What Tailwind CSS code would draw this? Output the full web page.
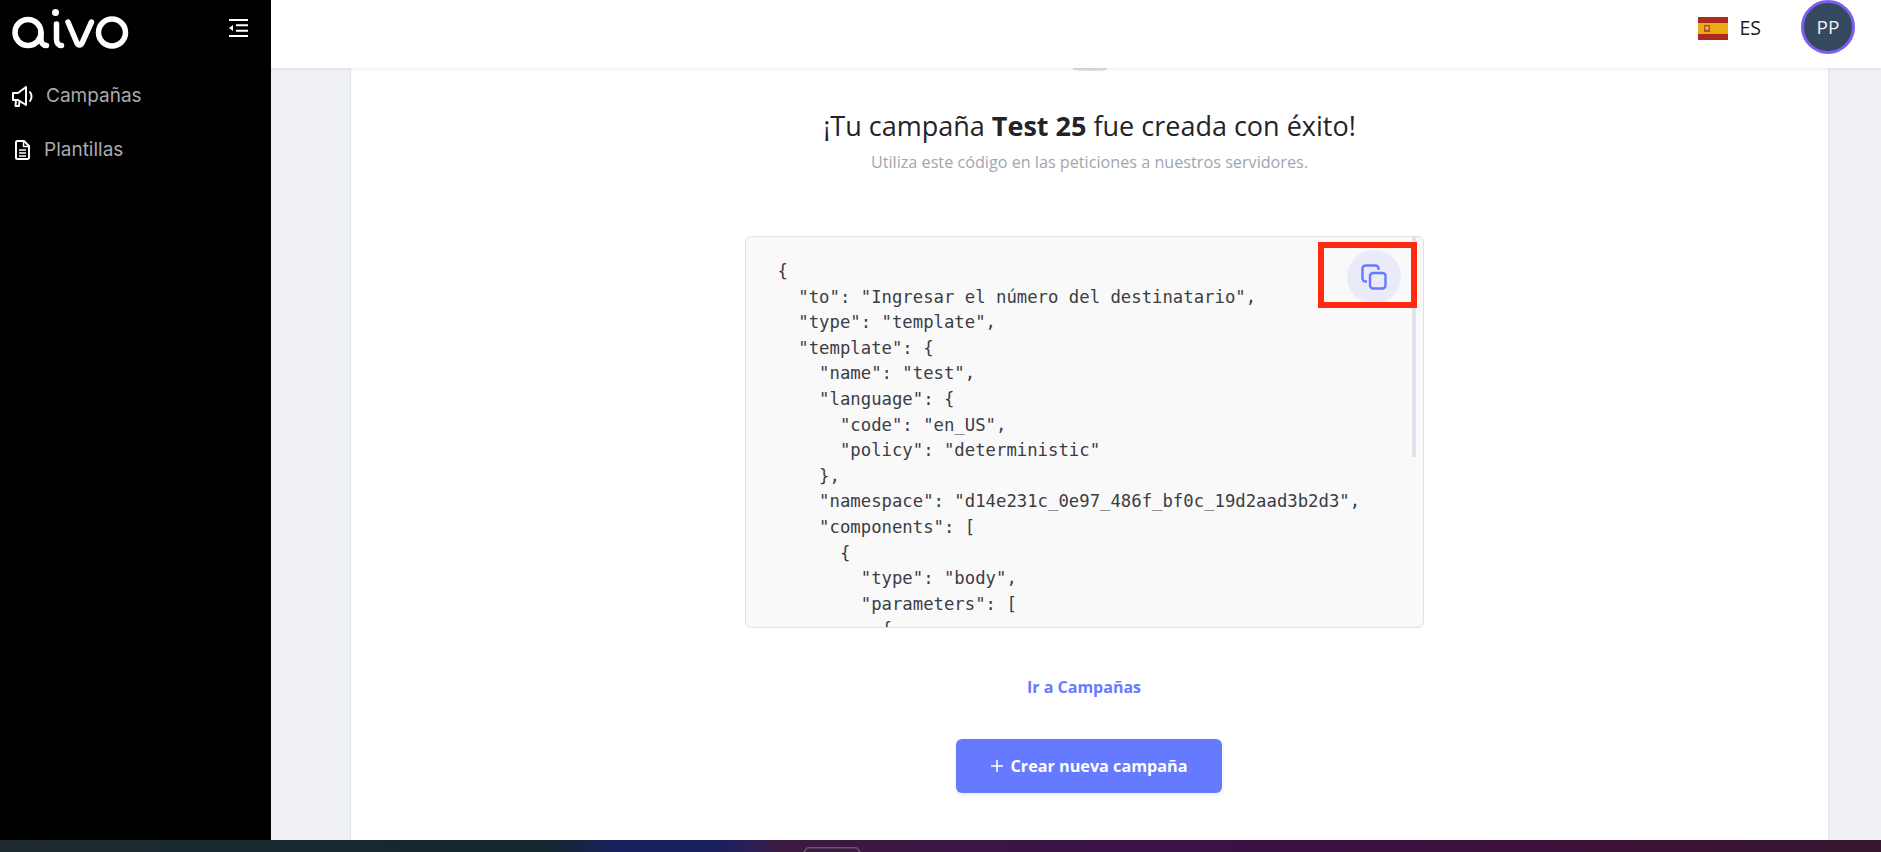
<!DOCTYPE html>
<html lang="es">
<head>
    <meta charset="UTF-8">
    <meta name="viewport" content="width=device-width, initial-scale=1.0">
    <title>Aivo - Campaña creada</title>
    <script src="https://cdn.jsdelivr.net/npm/@tailwindcss/browser@4"></script>
</head>
<body class="h-[852px] w-[1881px] overflow-hidden bg-white font-['Open_Sans',sans-serif]">
    <div class="flex h-[840px]">
        <!-- Sidebar -->
        <aside class="w-[271px] shrink-0 bg-black">
            <div class="flex h-[68px] items-start justify-between pl-[12px] pr-[23px] pt-[9px]">
                <svg width="117" height="40" viewBox="0 0 117 40" fill="none" stroke="white" stroke-width="5.500" stroke-linecap="round">
                    <circle cx="16" cy="23.500" r="13"/>
                    <path d="M29 24v6c0 4 2 6.500 5.500 6.500"/>
                    <path d="M44.500 15v15c0 4 2 6.500 5 6.500"/>
                    <circle cx="43.500" cy="3.500" r="3.500" fill="white" stroke="none"/>
                    <path d="M56 13l8.500 20c1.500 4 4.500 4 6 0l9-20"/>
                    <circle cx="100" cy="23.500" r="13.500"/>
                </svg>
                <svg class="mt-[10px]" width="19" height="18" viewBox="0 0 19 18" fill="none" stroke="white" stroke-width="2">
                    <path d="M0 1h19M7 6.300h12M7 11.700h12M0 17h19"/>
                    <path d="M4 6v6L0 9z" fill="white" stroke="none"/>
                </svg>
            </div>
            <nav class="pt-[1px] font-['Inter',sans-serif] text-[19px] text-[#aaaaae]">
                <a href="#" class="flex h-[54px] items-center gap-[12px] pl-[12px]">
                    <svg width="22" height="21" viewBox="0 0 22 21" fill="none" stroke="white" stroke-width="2" stroke-linejoin="round" stroke-linecap="round">
                        <path d="M1 7h5l8-6v18l-8-5H1z"/>
                        <path d="M4 14l-.5 6H7l.5-5"/>
                        <path d="M18 6c2 2.500 2 6.500 0 9"/>
                    </svg>
                    Campañas
                </a>
                <a href="#" class="flex h-[54px] items-center gap-[14px] pl-[15px]">
                    <svg width="15" height="20" viewBox="0 0 15 20" fill="none" stroke="white" stroke-width="2" stroke-linejoin="round">
                        <path d="M2.500 1H9l5 5v11.500a1.500 1.500 0 0 1-1.500 1.500h-10A1.500 1.500 0 0 1 1 17.500v-15A1.500 1.500 0 0 1 2.500 1z"/>
                        <path d="M8.500 1v5.500H14M4 10h7M4 13h7M4 16h7" stroke-width="1.500"/>
                    </svg>
                    Plantillas
                </a>
            </nav>
        </aside>

        <div class="flex min-w-0 flex-1 flex-col bg-[#f0f1f5]">
            <!-- Header -->
            <header class="relative z-10 flex h-[68px] shrink-0 items-start justify-end bg-white pr-[26px] shadow-[0_1px_3px_rgba(40,50,80,0.1)]">
                <svg class="mt-[17px]" width="30" height="23" viewBox="0 0 30 23">
                    <rect width="30" height="23" fill="#ad2a1c"/>
                    <rect y="6" width="30" height="11" fill="#e9ac14"/>
                    <rect x="6" y="8" width="6" height="7" fill="#b4502a"/>
                    <rect x="7.500" y="9.500" width="3" height="3" fill="#e9c06a"/>
                </svg>
                <span class="ml-[11px] mt-[14px] text-[19.500px] leading-[28px] text-[#1c1c22]">ES</span>
                <div class="ml-[40px] flex h-[54px] w-[54px] items-center justify-center rounded-full border-[3px] border-[#7c5cf2] bg-[#34495e] text-[19px] text-[#eef0f4]">PP</div>
            </header>

            <!-- Content -->
            <main class="ml-[79px] mr-[52px] flex min-h-0 flex-1 flex-col items-center overflow-hidden border-x border-[#e3e5ee] bg-white">
                <div class="h-[3px] w-[34px] shrink-0 rounded-b-[100%] bg-[#dcdde5]"></div>
                <h1 class="mt-[36px] text-[27px] leading-[38px] text-[#232329]">¡Tu campaña <b class="font-bold">Test 25</b> fue creada con éxito!</h1>
                <p class="mt-[5px] text-[16.200px] leading-[24px] text-[#a2a6ad]">Utiliza este código en las peticiones a nuestros servidores.</p>

                <div class="relative mr-[11px] mt-[62px] h-[392px] w-[679px] shrink-0 overflow-hidden rounded-[6px] border border-[#e0e1ec] bg-[#f9f9f9]">
<pre class="pl-[32px] pt-[22px] font-['DejaVu_Sans_Mono',monospace] text-[17.300px] leading-[25.600px] text-[#3c3d44]">{
  "to": "Ingresar el número del destinatario",
  "type": "template",
  "template": {
    "name": "test",
    "language": {
      "code": "en_US",
      "policy": "deterministic"
    },
    "namespace": "d14e231c_0e97_486f_bf0c_19d2aad3b2d3",
    "components": [
      {
        "type": "body",
        "parameters": [
          {</pre>
                    <div class="absolute right-[7px] top-0 h-[220px] w-[4px] bg-[#dfe1ef]"></div>
                    <button class="absolute left-[601px] top-[13px] flex h-[54px] w-[54px] items-center justify-center rounded-full bg-[#e9ebf9]">
                        <svg width="26" height="26" viewBox="0 0 26 26" fill="none" stroke="#667aff" stroke-width="2.400" stroke-linejoin="round">
                            <rect x="9" y="9" width="15.500" height="15.500" rx="3"/>
                            <path d="M6 17.500H4.500a3 3 0 0 1-3-3V4.500a3 3 0 0 1 3-3h10a3 3 0 0 1 3 3V6"/>
                        </svg>
                    </button>
                    <!-- Annotation -->
                    <div class="absolute left-[572px] top-[5px] h-[66px] w-[99px] border-[6px] border-[#ff2a0f]"></div>
                </div>

                <a href="#" class="mr-[11px] mt-[47px] text-[16px] font-bold leading-[24px] text-[#667aff]">Ir a Campañas</a>
                <button class="mr-[2px] mt-[40px] flex h-[54px] w-[266px] shrink-0 items-center justify-center gap-[7px] rounded-[6px] bg-[#667aff] pl-[2px] text-[16.200px] font-bold text-white shadow-[0_2px_4px_rgba(40,50,90,0.1)]">
                    <svg width="12" height="12" viewBox="0 0 12 12" stroke="white" stroke-width="1.600"><path d="M6 0v12M0 6h12"/></svg>
                    Crear nueva campaña
                </button>
            </main>
        </div>
    </div>

    <!-- Desktop strip below the window -->
    <div class="relative h-[12px] bg-[linear-gradient(90deg,#1e2a30_0%,#13282f_29%,#1a1f5e_33%,#1a1f5e_38%,#2a1f55_40%,#3c1a40_41.500%,#3a1248_60%,#3d1038_85%,#35182f_100%)]">
        <svg class="absolute bottom-0 left-[803px]" width="58" height="5" viewBox="0 0 58 5" fill="none" stroke="#5c5c5c" stroke-width="1.500"><path d="M1 5l2-3c.5-1 1-1.200 2-1.200h48c1 0 1.500.2 2 1.200l2 3"/></svg>
    </div>
</body>
</html>
